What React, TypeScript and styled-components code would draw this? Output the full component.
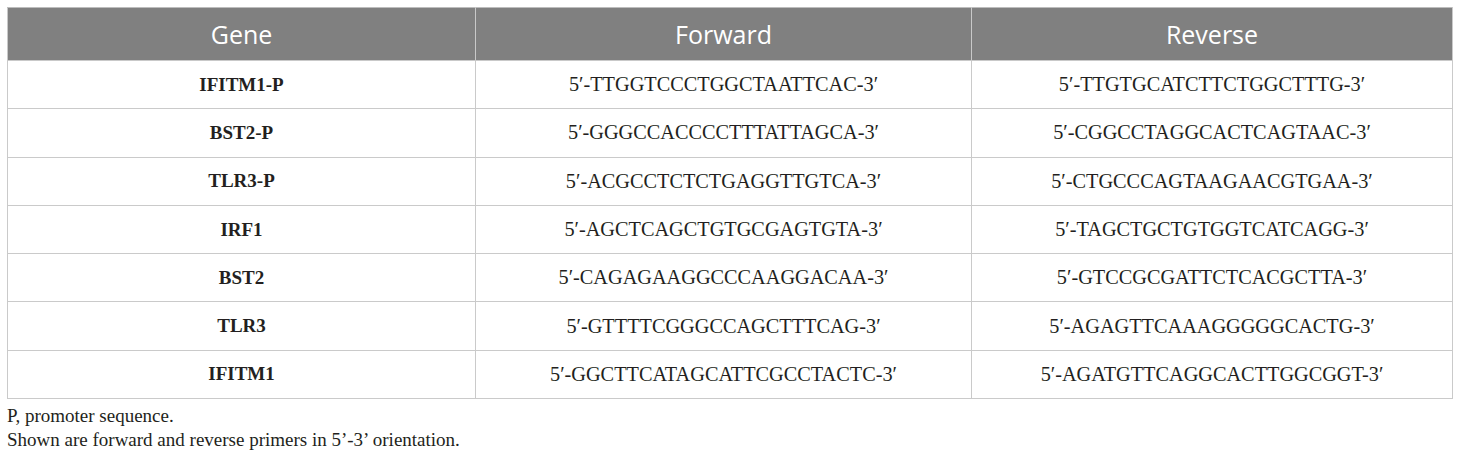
import React from "react";
import styled, { createGlobalStyle } from "styled-components";

const Global = createGlobalStyle`
  html, body { margin: 0; padding: 0; background: #ffffff; }
  body { font-family: "Liberation Serif", "Times New Roman", serif; color: #222; }
`;

const Page = styled.div`
  padding: 7px 8px 0 7px;
`;

const Table = styled.table`
  width: 1445px;
  border-collapse: collapse;
  table-layout: fixed;
`;

const HeadCell = styled.th<{ $w: number }>`
  width: ${(p) => p.$w}px;
  height: 52px;
  padding: 0;
  background: #808080;
  color: #ffffff;
  font-family: "Open Sans", "Noto Sans", sans-serif;
  font-weight: 400;
  font-size: 25px;
  text-align: center;
  vertical-align: middle;
  border: 1px solid #c9c9c9;
  border-top-color: #bdbdbd;
`;

const Row = styled.tr`
  height: 48.3px;
`;

const Cell = styled.td<{ $bold?: boolean }>`
  padding: 0;
  text-align: center;
  vertical-align: middle;
  font-family: "Liberation Serif", "Times New Roman", serif;
  font-size: ${(p) => (p.$bold ? 19 : 20.3)}px;
  font-weight: ${(p) => (p.$bold ? 700 : 400)};
  color: #231f20;
  border: 1px solid #cacaca;
`;

const Notes = styled.div`
  padding-top: 5px;
  font-family: "Liberation Serif", "Times New Roman", serif;
  font-size: 19px;
  line-height: 24px;
  color: #231f20;
`;

const rows: [string, string, string][] = [
  ["IFITM1-P", "5\u2032-TTGGTCCCTGGCTAATTCAC-3\u2032", "5\u2032-TTGTGCATCTTCTGGCTTTG-3\u2032"],
  ["BST2-P", "5\u2032-GGGCCACCCCTTTATTAGCA-3\u2032", "5\u2032-CGGCCTAGGCACTCAGTAAC-3\u2032"],
  ["TLR3-P", "5\u2032-ACGCCTCTCTGAGGTTGTCA-3\u2032", "5\u2032-CTGCCCAGTAAGAACGTGAA-3\u2032"],
  ["IRF1", "5\u2032-AGCTCAGCTGTGCGAGTGTA-3\u2032", "5\u2032-TAGCTGCTGTGGTCATCAGG-3\u2032"],
  ["BST2", "5\u2032-CAGAGAAGGCCCAAGGACAA-3\u2032", "5\u2032-GTCCGCGATTCTCACGCTTA-3\u2032"],
  ["TLR3", "5\u2032-GTTTTCGGGCCAGCTTTCAG-3\u2032", "5\u2032-AGAGTTCAAAGGGGGCACTG-3\u2032"],
  ["IFITM1", "5\u2032-GGCTTCATAGCATTCGCCTACTC-3\u2032", "5\u2032-AGATGTTCAGGCACTTGGCGGT-3\u2032"],
];

export default function App() {
  return (
    <>
      <Global />
      <Page>
        <Table>
          <thead>
            <tr>
              <HeadCell $w={467}>Gene</HeadCell>
              <HeadCell $w={495}>Forward</HeadCell>
              <HeadCell $w={480}>Reverse</HeadCell>
            </tr>
          </thead>
          <tbody>
            {rows.map(([g, f, r]) => (
              <Row key={g}>
                <Cell $bold>{g}</Cell>
                <Cell>{f}</Cell>
                <Cell>{r}</Cell>
              </Row>
            ))}
          </tbody>
        </Table>
        <Notes>
          <div>P, promoter sequence.</div>
          <div>Shown are forward and reverse primers in 5’-3’ orientation.</div>
        </Notes>
      </Page>
    </>
  );
}
